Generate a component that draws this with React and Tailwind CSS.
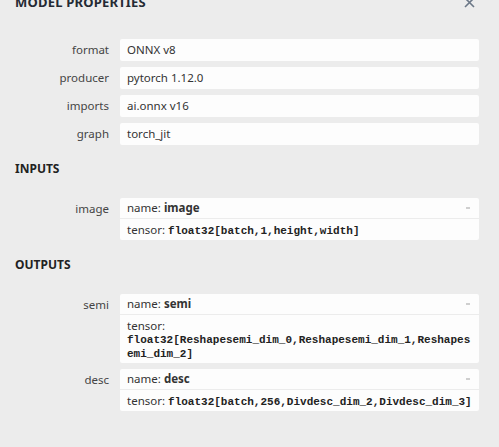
const PROPS = [
  ["format", "ONNX v8"],
  ["producer", "pytorch 1.12.0"],
  ["imports", "ai.onnx v16"],
  ["graph", "torch_jit"],
];

const INPUTS = [{ label: "image", name: "image", type: "float32[batch,1,height,width]" }];

const OUTPUTS = [
  { label: "semi", name: "semi", type: "float32[Reshapesemi_dim_0,Reshapesemi_dim_1,Reshapesemi_dim_2]" },
  { label: "desc", name: "desc", type: "float32[batch,256,Divdesc_dim_2,Divdesc_dim_3]" },
];

function Label({ children }) {
  return <div className="w-[120px] shrink-0 pr-[11px] text-right leading-[21px] text-[#444]">{children}</div>;
}

function PropRow({ label, value }) {
  return (
    <div className="flex">
      <Label>{label}</Label>
      <div className="w-[359px] h-[22px] rounded-[2px] bg-[#fdfdfd] pl-[7px] flex items-center text-[#333]">{value}</div>
    </div>
  );
}

function ArgRow({ label, name, type }) {
  return (
    <div className="flex">
      <Label>{label}</Label>
      <div className="w-[359px] rounded-[2px] bg-[#fdfdfd] text-[#333]">
        <div className="h-[21px] pl-[7px] pr-[9px] flex items-center justify-between border-b border-[#ececec]">
          <span>
            name: <b className="font-bold">{name}</b>
          </span>
          <span className="w-[4px] h-[2px] bg-[#cfcfcf]" />
        </div>
        <div className="pl-[7px] pr-[5px] pt-[4px] pb-[3px] leading-[13px] [overflow-wrap:break-word]">
          tensor: <code className="font-['Liberation_Mono',monospace] text-[11px] leading-[12px] font-bold text-[#222]">{type}</code>
        </div>
      </div>
    </div>
  );
}

function Heading({ children, className }) {
  return <div className={"px-[15px] h-[16px] leading-[16px] font-bold text-[12px] text-[#222] " + className}>{children}</div>;
}

export default function App() {
  return (
    <div className="min-h-screen bg-[#ececec] font-['Noto_Sans',sans-serif] text-[11.5px] overflow-hidden">
      <div className="-mt-[6px] h-[16px] px-[15px] flex items-center justify-between">
        <div className="font-bold text-[13px] leading-[16px] text-[#242a33] tracking-[0.2px]">MODEL PROPERTIES</div>
        <svg width="11" height="11" viewBox="0 0 11 11" className="mr-[9px]">
          <path d="M1 1 L10 10 M10 1 L1 10" stroke="#6b7787" strokeWidth="1.6" />
        </svg>
      </div>

      <div className="mt-[29px] flex flex-col gap-[6px]">
        {PROPS.map(([l, v]) => (
          <PropRow key={l} label={l} value={v} />
        ))}
      </div>

      <Heading className="mt-[16px]">INPUTS</Heading>
      <div className="mt-[21px] flex flex-col gap-[6px]">
        {INPUTS.map((a) => (
          <ArgRow key={a.label} {...a} />
        ))}
      </div>

      <Heading className="mt-[17px]">OUTPUTS</Heading>
      <div className="mt-[21px] flex flex-col gap-[6px]">
        {OUTPUTS.map((a) => (
          <ArgRow key={a.label} {...a} />
        ))}
      </div>
    </div>
  );
}
